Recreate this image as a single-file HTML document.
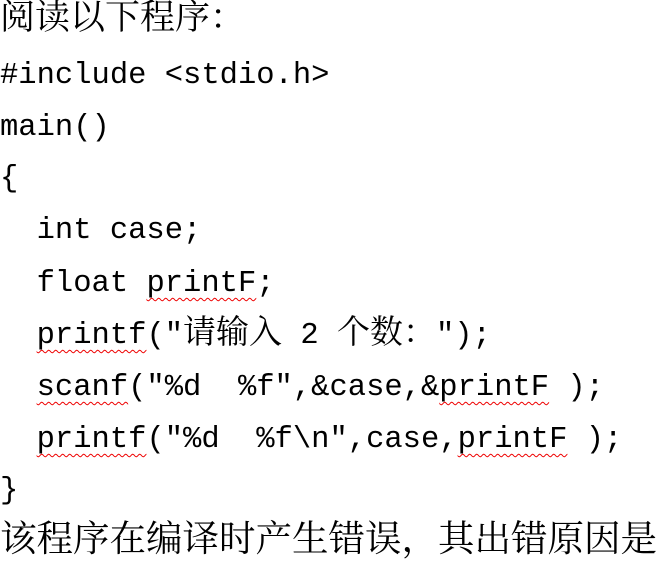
<!DOCTYPE html>
<html><head><meta charset="utf-8"><style>
html,body{margin:0;padding:0;background:#fff;width:669px;height:572px;overflow:hidden}
.l{position:absolute;left:0;height:52px;line-height:52px;white-space:pre;font-family:"Liberation Mono","Noto Serif CJK SC","Noto Sans CJK SC",monospace;font-size:30.5px;color:#000}
.c{font-family:"Noto Serif CJK SC","Noto Sans CJK SC",serif;font-size:36.5px;line-height:0}
.w{text-decoration:underline wavy #e00;text-decoration-thickness:1px;text-underline-offset:6px}
</style></head><body>
<div class="l" style="top:-4px"><span class="c" style="font-size:35px">阅读以下程序：</span></div>
<div class="l" style="top:50px">#include &lt;stdio.h&gt;</div>
<div class="l" style="top:102px">main()</div>
<div class="l" style="top:153px">{</div>
<div class="l" style="top:205px">  int case;</div>
<div class="l" style="top:258px">  float <span class="w">printF</span>;</div>
<div class="l" style="top:310px">  <span class="w">printf</span>(″<span class="c" style="font-size:33px">请输入</span> 2 <span class="c" style="font-size:33px">个数：</span>″);</div>
<div class="l" style="top:362px">  <span class="w">scanf</span>(″%d  %f″,&amp;case,&amp;<span class="w">printF</span> );</div>
<div class="l" style="top:414px">  <span class="w">printf</span>(″%d  %f\n″,case,<span class="w">printF</span> );</div>
<div class="l" style="top:465px">}</div>
<div class="l" style="top:518px"><span class="c">该程序在编译时产生错误，其出错原因是</span></div>
</body></html>
